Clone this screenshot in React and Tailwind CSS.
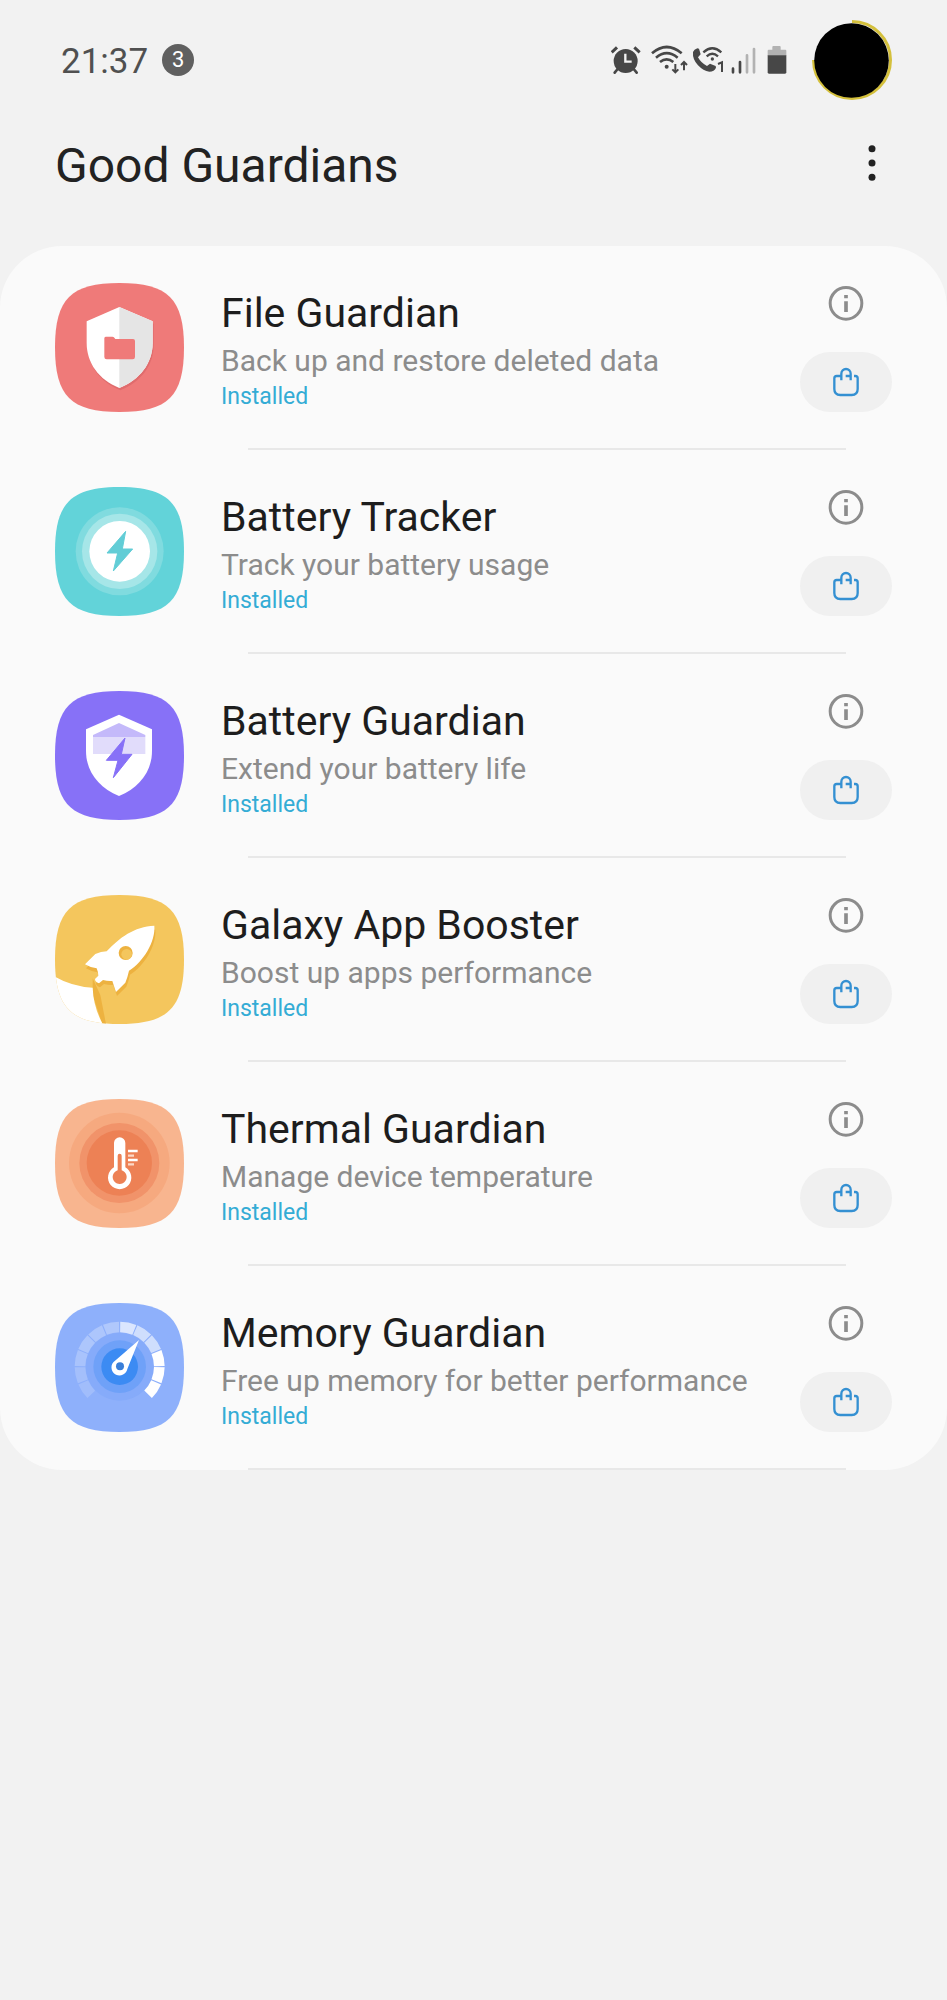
import React from "react";

const SQUIRCLE =
  "M0 193.5C0 48 48 0 193.5 0S387 48 387 193.5S339 387 193.5 387S0 339 0 193.5Z";

function AppIcon({ color, children, id }) {
  return (
    <svg viewBox="0 0 387 387" className="size-[129px] shrink-0" aria-hidden="true">
      <clipPath id={id}>
        <path d={SQUIRCLE} />
      </clipPath>
      <g clipPath={`url(#${id})`}>
        <rect width="387" height="387" fill={color} />
        {children}
      </g>
    </svg>
  );
}

function FileIcon() {
  const shield = "M193 72L293 115V180C293 240 255 290 193 315C131 290 95 240 95 180V115Z";
  return (
    <AppIcon id="file" color="#ef7a79">
      <path d={shield} fill="#e06c6d" transform="translate(3 7)" />
      <path d={shield} fill="#fff" />
      <path d="M193 72L293 115V180C293 240 255 290 193 315Z" fill="#e5e5e5" />
      <path
        d="M152 161H172Q176 161 178 164L181 168H234Q240 168 240 174V222Q240 229 233 229H155Q148 229 148 222V166Q148 161 152 161Z"
        fill="#ef7a79"
      />
    </AppIcon>
  );
}

function TrackerIcon() {
  return (
    <AppIcon id="tracker" color="#62d3d9">
      <circle cx="194" cy="193" r="132" fill="#80dbdf" />
      <circle cx="194" cy="193" r="113" fill="#a6e6e8" />
      <circle cx="194" cy="193" r="91" fill="#fff" />
      <path
        d="M212 133L156 198H188L175 252L233 186H202Z"
        fill="#62cdd6"
        stroke="#62cdd6"
        strokeWidth="3"
        strokeLinejoin="round"
      />
    </AppIcon>
  );
}

function BatteryGuardianIcon() {
  return (
    <AppIcon id="guardian" color="#8771f7">
      <path d="M192 71L291 115V180C291 240 254 290 192 315C130 290 93 240 93 180V115Z" fill="#fff" />
      <path d="M192 96L271 132V138H114V132Z" fill="#c4b9fa" />
      <rect x="114" y="138" width="157" height="51" fill="#e1dcfb" />
      <path
        d="M210 141L154 208H189L175 260L231 190H199Z"
        fill="#8771f7"
        stroke="#8771f7"
        strokeWidth="3"
        strokeLinejoin="round"
      />
    </AppIcon>
  );
}

function RocketIcon() {
  const rocket =
    "M298 92C238 94 192 129 155 169Q138 170 121 177L90 208Q108 219 125 220Q130 232 130 242L120 252Q120 261 132 265L144 255Q158 259 172 258L183 291L211 263Q218 246 222 227C265 200 302 140 298 92Z";
  return (
    <AppIcon id="rocket" color="#f4c65d">
      <path d="M113 250V300L142 387H153L136 300Z" fill="#edb240" />
      <path d="M0 245Q50 274 113 278Q115 335 143 387H0Z" fill="#fff" />
      <path d={rocket} fill="#edb240" transform="translate(3 12)" />
      <path d={rocket} fill="#fff" />
      <circle cx="212" cy="174" r="21" fill="#edb240" />
      <circle cx="215" cy="178" r="16" fill="#f4c65d" />
    </AppIcon>
  );
}

function ThermalIcon() {
  return (
    <AppIcon id="thermal" color="#f8b58f">
      <circle cx="193" cy="192" r="151" fill="#f6a97f" />
      <circle cx="193" cy="192" r="120" fill="#f1936a" />
      <circle cx="193" cy="192" r="98" fill="#ed8155" />
      <path d="M177 132A17 17 0 0 1 211 132V205A35 35 0 1 1 177 205Z" fill="#fff" />
      <path d="M188 170A6 6 0 0 1 200 170V214A21 21 0 1 1 188 214Z" fill="#ed8155" />
      <path d="M219 156H248M219 183H248" stroke="#fff" strokeWidth="7" />
      <path d="M219 170H237M219 196H237" stroke="#fbd9c8" strokeWidth="7" />
    </AppIcon>
  );
}

const GAUGE = [0.17, 0.2, 0.24, 0.28, 0.28, 0.3, 0.68, 0.58, 0.58, 1, 1, 1];

function MemoryIcon() {
  return (
    <AppIcon id="memory" color="#8eb0fb">
      <circle cx="194" cy="191" r="102" fill="#86abfa" />
      <circle cx="194" cy="191" r="79" fill="#6fa1f8" />
      <circle cx="194" cy="191" r="55" fill="#3c8bf3" />
      {GAUGE.map((opacity, i) => (
        <path
          key={i}
          d="M195.5 72A119 119 0 0 1 238 80.5"
          fill="none"
          stroke="#fff"
          strokeOpacity={opacity}
          strokeWidth="32"
          transform={`rotate(${-135 + i * 22.5} 194 191)`}
        />
      ))}
      <path d="M252 111L217 198A24 24 0 1 1 175 178Z" fill="#fff" />
      <circle cx="195" cy="190" r="12" fill="#3a7fd9" />
    </AppIcon>
  );
}

const APPS = [
  { name: "File Guardian", text: "Back up and restore deleted data", Icon: FileIcon },
  { name: "Battery Tracker", text: "Track your battery usage", Icon: TrackerIcon },
  { name: "Battery Guardian", text: "Extend your battery life", Icon: BatteryGuardianIcon },
  { name: "Galaxy App Booster", text: "Boost up apps performance", Icon: RocketIcon },
  { name: "Thermal Guardian", text: "Manage device temperature", Icon: ThermalIcon },
  { name: "Memory Guardian", text: "Free up memory for better performance", Icon: MemoryIcon },
];

function AppRow({ name, text, Icon }) {
  return (
    <li className="pt-[37px]">
      <div className="flex gap-[37px] px-[55px]">
        <Icon />
        <div className="min-w-0 flex-1 pt-[6px]">
          <h2 className="text-[41px] leading-[48px] text-[#1d1d1d]">{name}</h2>
          <p className="text-[30px] leading-[48px] text-[#8c8c8c]">{text}</p>
          <p className="text-[23px] leading-[24px] text-[#34acd5]">Installed</p>
        </div>
        <div className="flex w-[92px] shrink-0 flex-col items-center justify-between">
          <button type="button" aria-label={`About ${name}`} className="size-10">
            <svg viewBox="0 0 120 120" className="size-10">
              <circle cx="60" cy="61" r="47.5" fill="none" stroke="#8c8c8c" strokeWidth="9" />
              <path d="M60 36V46M60 55V87" stroke="#8c8c8c" strokeWidth="11" />
            </svg>
          </button>
          <button
            type="button"
            aria-label={`Open ${name} in store`}
            className="flex h-[60px] w-full items-center justify-center rounded-full bg-[#f0f0f0]"
          >
            <svg viewBox="0 0 90 90" className="size-[30px]" fill="none" stroke="#3490d2" strokeWidth="7">
              <path d="M30 27H17Q10 27 10 34V66Q10 84 28 84H62Q80 84 80 66V34Q80 27 73 27H69" />
              <path d="M31 40V20A14 14 0 0 1 59 20V40M59 27H44" />
            </svg>
          </button>
        </div>
      </div>
      <div className="mt-[36px] mr-[101px] ml-[248px] h-[2px] bg-[#e8e8e8]" />
    </li>
  );
}

function StatusIcons() {
  return (
    <div className="flex items-center" aria-hidden="true">
      <svg viewBox="64 136 90 90" className="mr-[10px] size-[30px]" fill="none" stroke="#474747">
        <circle cx="108" cy="184" r="36" fill="#474747" stroke="none" />
        <path d="M66 158L82 143M150 158L134 143" strokeWidth="9" />
        <path d="M84 208L75 219M132 208L141 219" strokeWidth="8" strokeLinecap="round" />
        <path d="M107 162V186H126" stroke="#f2f2f2" strokeWidth="7" />
      </svg>
      <svg viewBox="184 136 111 90" className="mr-[4px] h-[30px] w-[37px]" fill="none" stroke="#474747" strokeWidth="8">
        <path d="M187 161Q231 123 276 161M199 174Q231 147 264 174M211 187Q231 171 251 187" />
        <circle cx="231" cy="201" r="6" fill="#474747" stroke="none" />
        <path d="M257 193V217M248 209L257 218L266 209M283 212V188M274 196L283 187L292 196" strokeWidth="6" />
      </svg>
      <svg viewBox="307 136 99 90" className="mr-[6px] h-[30px] w-[33px]" fill="none" stroke="#474747">
        <path
          d="M310 157Q313 150 323 146L328 147L333 164L325 173Q334 190 352 199L361 192L378 199L379 204Q374 216 359 216Q341 214 325 197Q308 179 310 157Z"
          fill="#474747"
          stroke="none"
        />
        <path d="M341 158Q368 134 395 158M351 170Q368 155 385 170" strokeWidth="7" />
        <circle cx="368" cy="178" r="5" fill="#474747" stroke="none" />
        <path d="M385 193L397 188V217" strokeWidth="6" />
      </svg>
      <svg viewBox="424 136 75 90" className="mr-[11px] h-[30px] w-[25px]" strokeWidth="8" strokeLinecap="round">
        <path d="M430 207V218M451 187V218" stroke="#474747" />
        <path d="M472 167V218M493 148V218" stroke="#b2b2b2" />
      </svg>
      <svg viewBox="533 136 60 90" className="mr-[25px] h-[30px] w-[20px]">
        <path d="M535 168V153Q535 150 538 150H549V142Q549 139 552 139H571Q574 139 574 142V150H588Q591 150 591 153V168Z" fill="#b2b2b2" />
        <path d="M535 167H591V218Q591 222 587 222H539Q535 222 535 218Z" fill="#474747" />
      </svg>
      <svg viewBox="0 0 80 80" className="size-20">
        <path d="M40 1.5A38.5 38.5 0 1 1 1.5 40" fill="none" stroke="#d4c03c" strokeWidth="3" />
        <circle cx="39.5" cy="40.5" r="37.3" fill="#000" />
      </svg>
    </div>
  );
}

export default function App() {
  return (
    <div className="min-h-screen bg-[#f2f2f2] font-['Roboto',sans-serif]">
      <div className="flex h-[120px] items-center justify-between pr-[55px] pl-[61px]">
        <div className="flex items-end gap-[14px]">
          <span className="text-[35px] leading-[28px] text-[#505050]">21:37</span>
          <span className="flex size-8 items-center justify-center rounded-full bg-[#606060] text-[22px] leading-[32px] text-white">
            3
          </span>
        </div>
        <StatusIcons />
      </div>
      <header className="flex items-start justify-between px-[55px] pt-[18px] pb-[52px]">
        <h1 className="text-[48px] leading-[56px] text-[#222222]">Good Guardians</h1>
        <button type="button" aria-label="More options" className="flex h-[50px] w-10 items-center justify-center">
          <svg viewBox="0 0 24 108" className="h-[36px] w-[8px]" fill="#222222">
            <circle cx="12" cy="11" r="10.5" />
            <circle cx="12" cy="54" r="10.5" />
            <circle cx="12" cy="97" r="10.5" />
          </svg>
        </button>
      </header>
      <main>
        <ul className="overflow-hidden rounded-[62px] bg-[#fafafa]">
          {APPS.map((app) => (
            <AppRow key={app.name} {...app} />
          ))}
        </ul>
      </main>
    </div>
  );
}
